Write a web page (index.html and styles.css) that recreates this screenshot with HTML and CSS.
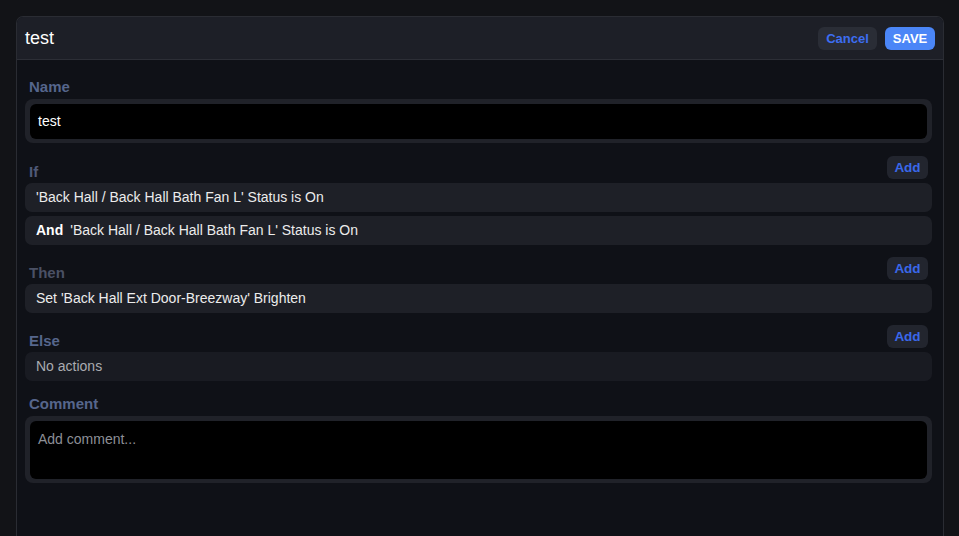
FILE: index.html
```html
<!DOCTYPE html>
<html>
<head>
<meta charset="utf-8">
<link rel="stylesheet" href="styles.css">
</head>
<body>
<div class="panel">
  <div class="panel-header">
    <div class="title">test</div>
    <div class="actions">
      <button class="btn btn-cancel">Cancel</button>
      <button class="btn btn-save">SAVE</button>
    </div>
  </div>
  <div class="panel-body">
    <div class="label label-name">Name</div>
    <div class="field">
      <div class="input">test</div>
    </div>

    <div class="section-head">
      <div class="label label-if">If</div>
      <button class="btn btn-add">Add</button>
    </div>
    <div class="rows">
      <div class="row">'Back Hall / Back Hall Bath Fan L' Status is On</div>
      <div class="row"><span class="conj">And</span>'Back Hall / Back Hall Bath Fan L' Status is On</div>
    </div>

    <div class="section-head">
      <div class="label label-then">Then</div>
      <button class="btn btn-add">Add</button>
    </div>
    <div class="rows">
      <div class="row">Set 'Back Hall Ext Door-Breezway' Brighten</div>
    </div>

    <div class="section-head">
      <div class="label label-else">Else</div>
      <button class="btn btn-add">Add</button>
    </div>
    <div class="rows">
      <div class="row row-empty">No actions</div>
    </div>

    <div class="label label-comment">Comment</div>
    <div class="field">
      <div class="textarea">Add comment...</div>
    </div>
  </div>
</div>
</body>
</html>
```
FILE: styles.css
```css
html, body {
  margin: 0;
  padding: 0;
}
body {
  background: #121317;
  font-family: "Liberation Sans", Arial, sans-serif;
  height: 536px;
  overflow: hidden;
  padding: 16px 15px 0 16px;
  box-sizing: border-box;
}
.panel {
  background: #0f1117;
  border: 1px solid #2a2c33;
  border-bottom: none;
  border-radius: 7px 7px 0 0;
  height: 520px;
  box-sizing: border-box;
  overflow: hidden;
}
.panel-header {
  height: 42px;
  background: #1d1f27;
  border-bottom: 1px solid #2c2e36;
  display: flex;
  align-items: center;
  justify-content: space-between;
  padding: 0 8px 0 8px;
}
.title {
  color: #ffffff;
  font-size: 18px;
}
.actions {
  display: flex;
  gap: 8px;
}
.btn {
  font-family: "Liberation Sans", Arial, sans-serif;
  font-weight: bold;
  font-size: 13px;
  border: none;
  border-radius: 6px;
  height: 23px;
  padding: 0;
  cursor: pointer;
}
.btn-cancel {
  width: 59px;
  background: #2a2d36;
  color: #3d6ef2;
}
.btn-save {
  width: 50px;
  background: #4b86f7;
  color: #ffffff;
}
.btn-add {
  width: 41px;
  background: #22252e;
  color: #3a68ea;
  margin-right: 4px;
  font-size: 13.5px;
}
.panel-body {
  padding: 18px 11px 0 8px;
}
.label {
  font-weight: bold;
  font-size: 15px;
  line-height: 17px;
  color: #56668c;
}
.label-if { color: #4f5a78; }
.label-then { color: #4a5064; }
.label-name { margin-bottom: 4px; }
.label-comment { margin-top: 14px; margin-bottom: 4px; }
.field {
  background: #202229;
  border-radius: 8px;
  padding: 5px 5px 4px 5px;
}
.input {
  background: #000000;
  border-radius: 6px;
  height: 35px;
  box-sizing: border-box;
  display: flex;
  align-items: center;
  padding: 0 8px 1px 8px;
  color: #ffffff;
  font-size: 14px;
}
.textarea {
  background: #000000;
  border-radius: 6px;
  height: 58px;
  box-sizing: border-box;
  padding: 10px 8px;
  color: #8c8f96;
  font-size: 14px;
  line-height: 16px;
}
.section-head {
  display: flex;
  justify-content: space-between;
  align-items: flex-end;
  height: 23px;
  margin-top: 13px;
  margin-bottom: 4px;
}
.section-head .label {
  line-height: 14px;
  padding-left: 4px;
}
.label-name, .label-comment {
  padding-left: 4px;
}
.rows + .section-head {
  margin-top: 12px;
}
.rows {
  display: flex;
  flex-direction: column;
  gap: 4px;
}
.row {
  height: 29px;
  box-sizing: border-box;
  background: #1e2027;
  border-radius: 7px;
  display: flex;
  align-items: center;
  padding: 0 11px 1px 11px;
  color: #ececec;
  font-size: 14px;
}
.row-empty {
  background: #191b22;
  color: #a9abb0;
}
.conj {
  font-weight: bold;
  color: #ffffff;
  margin-right: 7px;
}
```
